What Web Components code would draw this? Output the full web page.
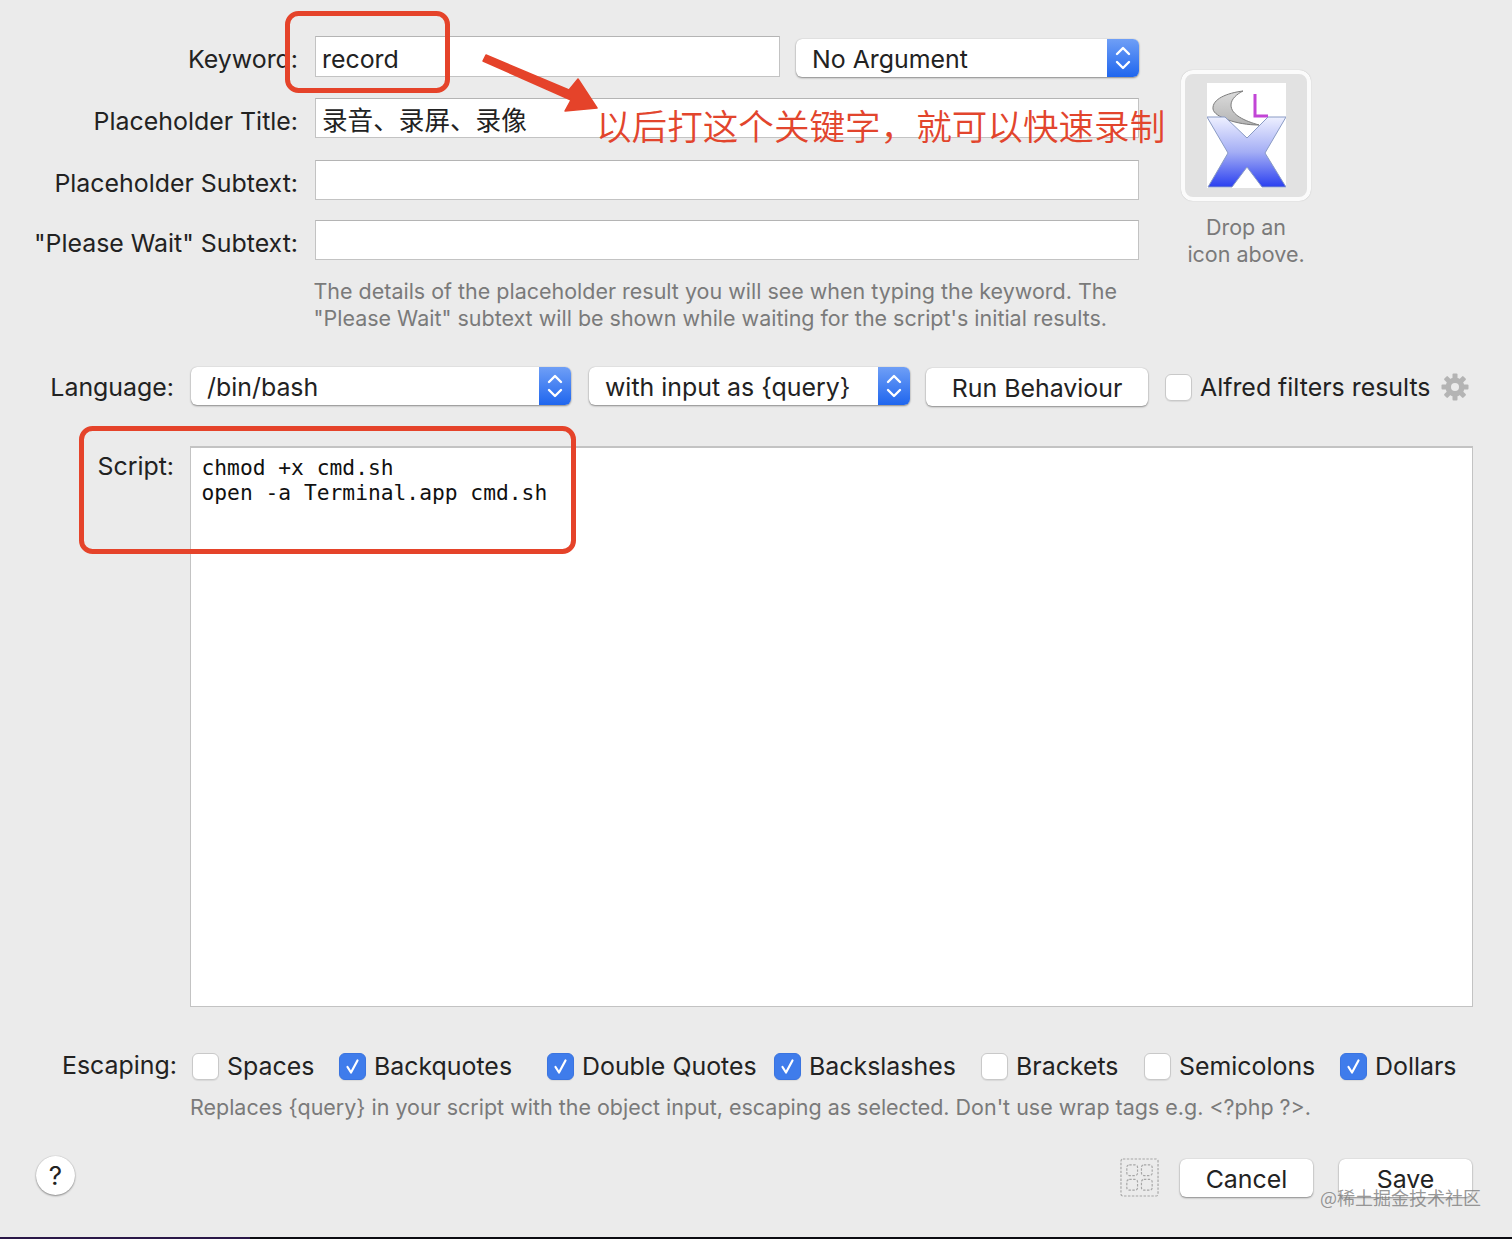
<!DOCTYPE html>
<html lang="en">
<head>
<meta charset="utf-8">
<title>Script Filter</title>
<style>
    html, body { margin: 0; padding: 0; background: #ebebeb; }
    body {
        font-family: Inter, "Noto Sans CJK SC", sans-serif;
        color: #222;
    }
</style>
</head>
<body>
<script-dialog></script-dialog>

<script>
// Text field with a right-aligned label
class FormField extends HTMLElement {
    constructor() {
        super();
        this.attachShadow({ mode: 'open' });
    }

    connectedCallback() {
        const label = this.getAttribute('label');
        this.shadowRoot.innerHTML = `
            <style>
                :host { display: contents; }
                .label {
                    font-size: 24.9px;
                    line-height: 46px;
                    height: 40px;
                    text-align: right;
                    white-space: nowrap;
                }
                .input {
                    box-sizing: border-box;
                    height: 40px;
                    background: #fff;
                    border: 1px solid #c3c3c3;
                    border-top-color: #b4b4b4;
                    font-size: 25.6px;
                    line-height: 44px;
                    padding-left: 6px;
                    white-space: nowrap;
                    overflow: hidden;
                }
            </style>
            <div class="label">${label}</div>
            <div class="input"><slot></slot></div>
        `;
    }
}

// Popup button with the blue stepper on the right
class PopupSelect extends HTMLElement {
    constructor() {
        super();
        this.attachShadow({ mode: 'open' });
    }

    connectedCallback() {
        this.shadowRoot.innerHTML = `
            <style>
                :host {
                    display: flex;
                    box-sizing: border-box;
                    height: 38px;
                    border-radius: 6px;
                    background: #fff;
                    box-shadow: 0 1px 2px rgba(0,0,0,0.4), 0 0 1px rgba(0,0,0,0.25);
                    overflow: hidden;
                    font-size: 24.9px;
                    line-height: 40px;
                }
                .text { flex: 1; padding-left: 16px; white-space: nowrap; }
                .stepper {
                    width: 32px;
                    background: linear-gradient(#6f9ff6, #1f66ee);
                    display: flex;
                    align-items: center;
                    justify-content: center;
                }
            </style>
            <div class="text"><slot></slot></div>
            <div class="stepper">
                <svg width="18" height="28" viewBox="0 0 18 28" fill="none" stroke="#fff" stroke-width="2.4" stroke-linecap="round" stroke-linejoin="round">
                    <path d="M3 10 L9 4 L15 10"/>
                    <path d="M3 18 L9 24 L15 18"/>
                </svg>
            </div>
        `;
    }
}

class PushButton extends HTMLElement {
    constructor() {
        super();
        this.attachShadow({ mode: 'open' });
    }

    connectedCallback() {
        this.shadowRoot.innerHTML = `
            <style>
                :host {
                    display: block;
                    box-sizing: border-box;
                    height: 38px;
                    border-radius: 6px;
                    background: #fff;
                    box-shadow: 0 1px 2px rgba(0,0,0,0.4), 0 0 1px rgba(0,0,0,0.25);
                    font-size: 24.9px;
                    line-height: 41px;
                    text-align: center;
                    white-space: nowrap;
                }
            </style>
            <slot></slot>
        `;
    }
}

class CheckOption extends HTMLElement {
    constructor() {
        super();
        this.attachShadow({ mode: 'open' });
    }

    connectedCallback() {
        const on = this.hasAttribute('checked');
        this.shadowRoot.innerHTML = `
            <style>
                :host {
                    display: flex;
                    align-items: center;
                    gap: 8px;
                    font-size: 24.9px;
                    line-height: 28px;
                    white-space: nowrap;
                }
                .box {
                    box-sizing: border-box;
                    width: 27px;
                    height: 27px;
                    border-radius: 6px;
                    background: #fff;
                    border: 1px solid #c9c9c9;
                    box-shadow: 0 1px 1px rgba(0,0,0,0.08);
                    flex: none;
                }
                .box.on {
                    background: #3f7ceb;
                    border-color: #3a74e0;
                    display: flex;
                    align-items: center;
                    justify-content: center;
                }
            </style>
            <div class="box ${on ? 'on' : ''}">
                ${on ? '<svg width="19" height="19" viewBox="0 0 19 19" fill="none" stroke="#fff" stroke-width="2.2" stroke-linecap="round" stroke-linejoin="round"><path d="M4.5 10 L8 15.5 L14.5 3.5"/></svg>' : ''}
            </div>
            <slot></slot>
        `;
    }
}

class GearIcon extends HTMLElement {
    constructor() {
        super();
        this.attachShadow({ mode: 'open' });
    }

    connectedCallback() {
        let teeth = '';
        for (let i = 0; i < 8; i++) {
            teeth += `<rect x="11.5" y="0.5" width="5" height="7" rx="1" transform="rotate(${i * 45} 14 14)"/>`;
        }
        this.shadowRoot.innerHTML = `
            <style>
                :host { display: block; width: 28px; height: 28px; }
                svg { display: block; }
            </style>
            <svg width="28" height="28" viewBox="0 0 28 28" fill="#b4b4b4">
                ${teeth}
                <circle cx="14" cy="14" r="9.5"/>
                <circle cx="14" cy="14" r="4" fill="#ebebeb"/>
            </svg>
        `;
    }
}

// Icon drop target, with the Alfred "X" picture
class IconWell extends HTMLElement {
    constructor() {
        super();
        this.attachShadow({ mode: 'open' });
    }

    connectedCallback() {
        this.shadowRoot.innerHTML = `
            <style>
                :host { display: flex; flex-direction: column; align-items: center; width: 130px; }
                .well {
                    box-sizing: border-box;
                    width: 130px;
                    height: 131px;
                    border: 4px solid #fbfbfb;
                    border-radius: 12px;
                    background: #e2e2e2;
                    display: flex;
                    align-items: center;
                    justify-content: center;
                    box-shadow: 0 0 1px rgba(0,0,0,0.25);
                }
                svg { display: block; }
                .caption {
                    margin-top: 13px;
                    font-size: 21.5px;
                    line-height: 27px;
                    color: #7a7a7a;
                    text-align: center;
                    white-space: nowrap;
                }
            </style>
            <div class="well">
                <svg width="79" height="105" viewBox="0 0 79 105">
                    <defs>
                        <linearGradient id="xfill" x1="0" y1="0" x2="0" y2="1">
                            <stop offset="0" stop-color="#eef0ff"/>
                            <stop offset="0.5" stop-color="#a4aef5"/>
                            <stop offset="1" stop-color="#2a3ff0"/>
                        </linearGradient>
                        <linearGradient id="moon" x1="0" y1="0" x2="0" y2="1">
                            <stop offset="0" stop-color="#dcdcdc"/>
                            <stop offset="1" stop-color="#b4b4b4"/>
                        </linearGradient>
                    </defs>
                    <rect width="79" height="105" fill="#fff"/>
                    <path d="M36 8 C20 10 5 16 6 26 C7 34 30 42 52 42 C38 38 24 32 24 22 C24 16 30 11 36 8 Z" fill="url(#moon)" stroke="#7d7d7d" stroke-width="1"/>
                    <path d="M48 11 L48 33 L61 33" fill="none" stroke="#c245d6" stroke-width="3"/>
                    <polygon points="0,34 18,34 40,55 61,34 79,34 58,70 79,104 55,104 40,84 25,104 1,104 21,70" fill="url(#xfill)" stroke="#8a9bc4" stroke-width="1"/>
                </svg>
            </div>
            <div class="caption"><slot></slot></div>
        `;
    }
}

class ScriptEditor extends HTMLElement {
    constructor() {
        super();
        this.attachShadow({ mode: 'open' });
    }

    connectedCallback() {
        this.shadowRoot.innerHTML = `
            <style>
                :host {
                    display: block;
                    box-sizing: border-box;
                    height: 561px;
                    background: #fff;
                    border: 1px solid #c3c3c3;
                    border-top-width: 2px;
                    padding: 7px 10.5px;
                    font-family: "DejaVu Sans Mono", monospace;
                    font-size: 21.28px;
                    line-height: 25px;
                    color: #111;
                }
                .code { white-space: pre; }
            </style>
            <div class="code"><slot></slot></div>
        `;
    }
}

class HelpButton extends HTMLElement {
    constructor() {
        super();
        this.attachShadow({ mode: 'open' });
    }

    connectedCallback() {
        this.shadowRoot.innerHTML = `
            <style>
                :host {
                    display: block;
                    width: 39px;
                    height: 39px;
                    border-radius: 50%;
                    background: #fff;
                    box-shadow: 0 1px 2px rgba(0,0,0,0.4), 0 0 1px rgba(0,0,0,0.25);
                    font-size: 26px;
                    line-height: 39px;
                    text-align: center;
                }
            </style>
            ?
        `;
    }
}

class GridIcon extends HTMLElement {
    constructor() {
        super();
        this.attachShadow({ mode: 'open' });
    }

    connectedCallback() {
        this.shadowRoot.innerHTML = `
            <style>
                :host { display: block; width: 39px; height: 39px; }
                svg { display: block; }
            </style>
            <svg width="39" height="39" viewBox="0 0 40 40" fill="none" stroke="#a6a6a6" stroke-width="1.2" stroke-dasharray="2.5 1.5">
                <rect x="1" y="1" width="38" height="38" rx="2"/>
                <rect x="7" y="7" width="11" height="11" rx="2.5"/>
                <rect x="22" y="7" width="11" height="11" rx="2.5"/>
                <rect x="7" y="22" width="11" height="11" rx="2.5"/>
                <rect x="22" y="22" width="11" height="11" rx="2.5"/>
            </svg>
        `;
    }
}

// Red marks someone drew on top of the screenshot
class RedNotes extends HTMLElement {
    constructor() {
        super();
        this.attachShadow({ mode: 'open' });
    }

    connectedCallback() {
        this.shadowRoot.innerHTML = `
            <style>
                :host { position: absolute; inset: 0; display: block; pointer-events: none; }
                svg { position: absolute; left: 0; top: 0; }
                .note {
                    position: absolute;
                    left: 596px;
                    top: 101px;
                    font-family: "Noto Sans CJK SC", sans-serif;
                    font-size: 35.6px;
                    line-height: 48px;
                    font-weight: 350;
                    color: #e2452d;
                    white-space: nowrap;
                }
                .mark {
                    position: absolute;
                    left: 1320px;
                    top: 1184px;
                    font-family: "Noto Sans CJK SC", sans-serif;
                    font-size: 18px;
                    line-height: 27px;
                    color: rgba(125,125,125,0.8);
                    white-space: nowrap;
                }
            </style>
            <svg width="1512" height="1239" viewBox="0 0 1512 1239" fill="none" stroke="#e5432a" stroke-width="5">
                <rect x="287.5" y="13.5" width="160" height="77" rx="11"/>
                <rect x="81.5" y="428.5" width="492" height="123" rx="11"/>
                <polygon points="486,55 569,90 578,79 597,108 565,111 571,100 483,61" fill="#e5432a" stroke="#e5432a" stroke-width="1.5" stroke-linejoin="round"/>
            </svg>
            <div class="note">以后打这个关键字，就可以快速录制</div>
            <div class="mark">@稀土掘金技术社区</div>
        `;
    }
}

class ScriptDialog extends HTMLElement {
    constructor() {
        super();
        this.attachShadow({ mode: 'open' });
    }

    connectedCallback() {
        this.shadowRoot.innerHTML = `
            <style>
                :host {
                    display: flex;
                    flex-direction: column;
                    position: relative;
                    width: 1512px;
                    height: 1239px;
                    overflow: hidden;
                    background: #ebebeb;
                    font-size: 24.9px;
                }
                .top { display: flex; padding-top: 36px; height: 367px; box-sizing: border-box; flex: none; }
                .fields {
                    display: grid;
                    grid-template-columns: 298px 824px;
                    grid-auto-rows: min-content;
                    column-gap: 17px;
                    align-items: start;
                }
                .first-row {
                    grid-column: 2;
                    display: flex;
                    gap: 16px;
                    height: 62px;
                    align-items: flex-start;
                }
                .first-row .key {
                    box-sizing: border-box;
                    width: 465px;
                    height: 41px;
                    background: #fff;
                    border: 1px solid #c3c3c3;
                    border-top-color: #b4b4b4;
                    line-height: 45px;
                    padding-left: 6px;
                }
                .first-row popup-select { width: 343px; margin-top: 3px; }
                .row-label { grid-row: 1; line-height: 46px; height: 40px; text-align: right; }
                .gap { grid-column: 1 / 3; }
                .hint {
                    grid-column: 2;
                    margin: 18px 0 0 -1.5px;
                    font-size: 21.47px;
                    line-height: 27px;
                    color: #7a7a7a;
                    white-space: nowrap;
                }
                icon-well { margin: 34px 0 0 42px; }

                .lang {
                    display: flex;
                    align-items: center;
                    height: 40px;
                    flex: none;
                }
                .side-label { width: 174px; text-align: right; flex: none; }
                .lang .a { width: 380px; margin: -2px 0 0 17px; }
                .lang .b { width: 321px; margin: -2px 0 0 18px; }
                .lang .c { width: 222px; margin-left: 16px; }
                .lang check-option { margin-left: 17px; }
                .lang gear-icon { margin-left: 11px; }

                .script { display: flex; margin-top: 39px; flex: none; }
                .script .side-label { padding-top: 4px; line-height: 32px; }
                script-editor { width: 1283px; margin-left: 16px; }

                .escape {
                    display: grid;
                    grid-template-columns: 147px 208px 227px 207px 163px 196px auto;
                    align-items: center;
                    margin: 45px 0 0 192px;
                    position: relative;
                }
                .escape-label { position: absolute; left: -130px; top: -3px; line-height: 32px; white-space: nowrap; }
                .escape-hint {
                    margin: 14px 0 0 190px;
                    font-size: 21.47px;
                    line-height: 27px;
                    color: #7a7a7a;
                    white-space: nowrap;
                }
                .bottom {
                    display: flex;
                    align-items: center;
                    margin-top: 37px;
                    padding: 0 40px 0 36px;
                }
                .bottom help-button { margin: -4px auto 0 0; }
                .bottom push-button { width: 133px; }
                .bottom .cancel { margin: 0 26px 0 21px; }
                .edge {
                    margin-top: auto;
                    height: 2px;
                    flex: none;
                    background: linear-gradient(90deg, #2a1848 0, #2a1848 250px, #0c0c12 250px);
                }
            </style>

            <section class="top">
                <div class="fields">
                    <div class="row-label">Keyword:</div>
                    <div class="first-row">
                        <div class="key">record</div>
                        <popup-select>No Argument</popup-select>
                    </div>
                    <form-field label="Placeholder Title:">录音、录屏、录像</form-field>
                    <div class="gap" style="height:22px"></div>
                    <form-field label="Placeholder Subtext:"></form-field>
                    <div class="gap" style="height:20px"></div>
                    <form-field label="&quot;Please Wait&quot; Subtext:"></form-field>
                    <div class="hint">The details of the placeholder result you will see when typing the keyword. The<br>"Please Wait" subtext will be shown while waiting for the script's initial results.</div>
                </div>
                <icon-well>Drop an<br>icon above.</icon-well>
            </section>

            <section class="lang">
                <div class="side-label">Language:</div>
                <popup-select class="a">/bin/bash</popup-select>
                <popup-select class="b">with input as {query}</popup-select>
                <push-button class="c">Run Behaviour</push-button>
                <check-option>Alfred filters results</check-option>
                <gear-icon></gear-icon>
            </section>

            <section class="script">
                <div class="side-label">Script:</div>
                <script-editor>chmod +x cmd.sh
open -a Terminal.app cmd.sh</script-editor>
            </section>

            <section class="escape">
                <div class="escape-label">Escaping:</div>
                <check-option>Spaces</check-option>
                <check-option checked>Backquotes</check-option>
                <check-option checked>Double Quotes</check-option>
                <check-option checked>Backslashes</check-option>
                <check-option>Brackets</check-option>
                <check-option>Semicolons</check-option>
                <check-option checked>Dollars</check-option>
            </section>
            <div class="escape-hint">Replaces {query} in your script with the object input, escaping as selected. Don't use wrap tags e.g. &lt;?php ?&gt;.</div>

            <section class="bottom">
                <help-button></help-button>
                <grid-icon></grid-icon>
                <push-button class="cancel">Cancel</push-button>
                <push-button>Save</push-button>
            </section>

            <div class="edge"></div>
            <red-notes></red-notes>
        `;
    }
}

customElements.define('form-field', FormField);
customElements.define('popup-select', PopupSelect);
customElements.define('push-button', PushButton);
customElements.define('check-option', CheckOption);
customElements.define('gear-icon', GearIcon);
customElements.define('icon-well', IconWell);
customElements.define('script-editor', ScriptEditor);
customElements.define('help-button', HelpButton);
customElements.define('grid-icon', GridIcon);
customElements.define('red-notes', RedNotes);
customElements.define('script-dialog', ScriptDialog);
</script>
</body>
</html>
